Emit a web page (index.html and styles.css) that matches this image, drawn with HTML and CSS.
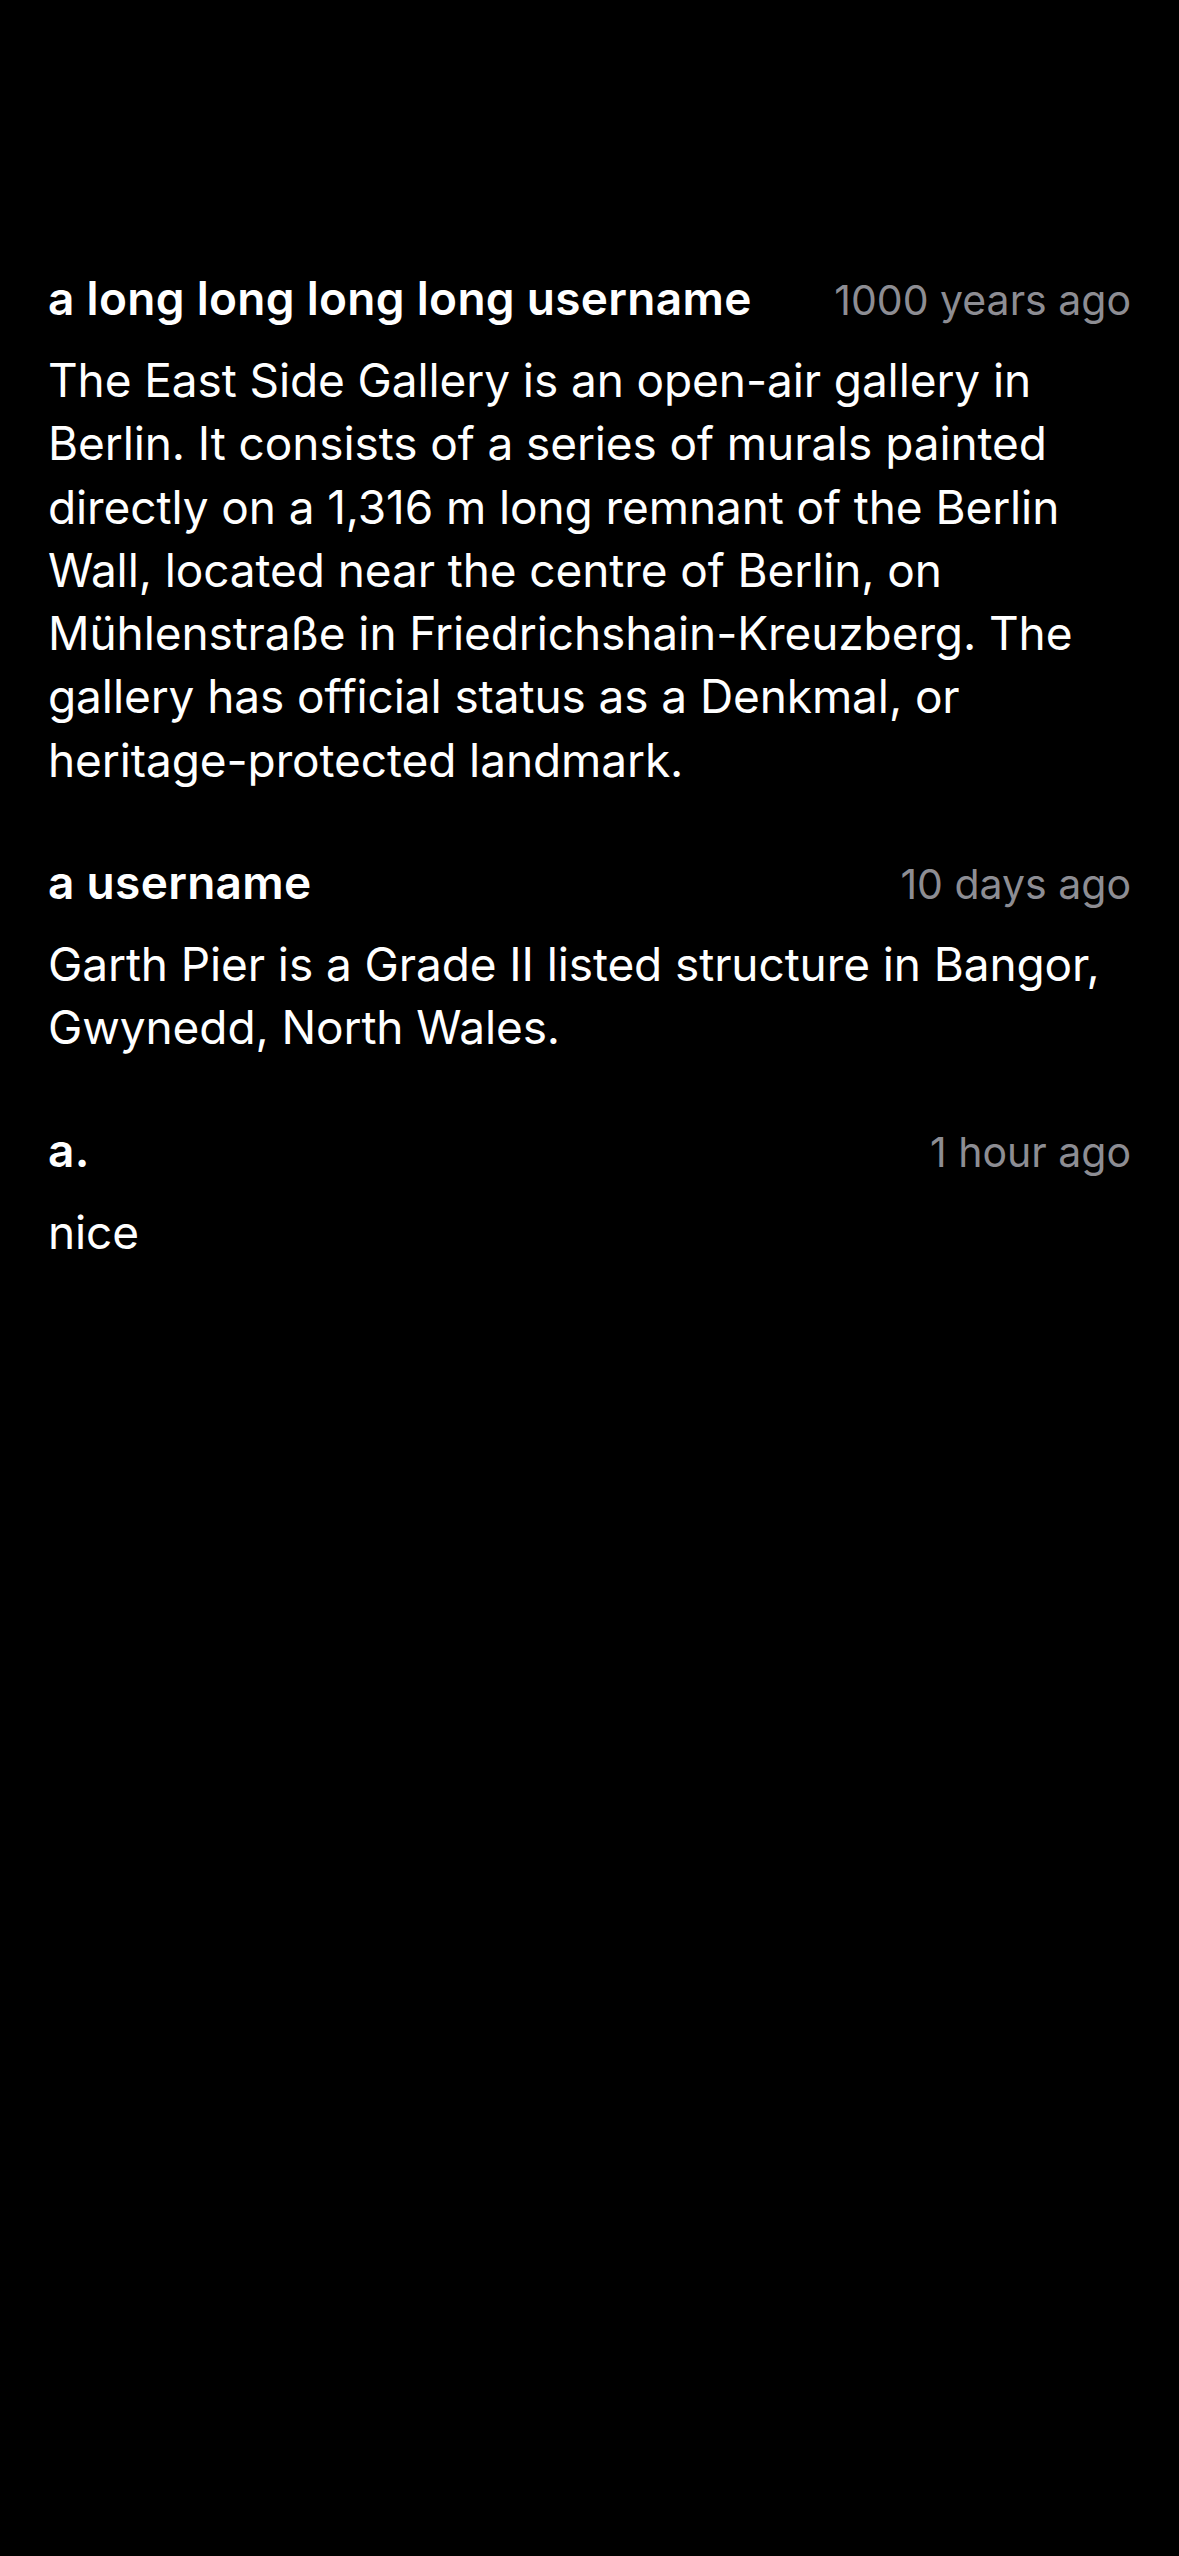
FILE: index.html
```html
<!DOCTYPE html>
<html lang="en">
<head>
<meta charset="utf-8">
<title>Comments</title>
<link rel="stylesheet" href="styles.css">
</head>
<body>
<main class="comments">
  <article class="comment">
    <header class="comment-head">
      <span class="author">a long long long long username</span>
      <span class="time">1000 years ago</span>
    </header>
    <p class="text">The East Side Gallery is an open-air gallery in Berlin. It consists of a series of murals painted directly on a 1,316 m long remnant of the Berlin Wall, located near the centre of Berlin, on Mühlenstraße in Friedrichshain-Kreuzberg. The gallery has official status as a Denkmal, or heritage-protected landmark.</p>
  </article>
  <article class="comment">
    <header class="comment-head">
      <span class="author">a username</span>
      <span class="time">10 days ago</span>
    </header>
    <p class="text">Garth Pier is a Grade II listed structure in Bangor, Gwynedd, North Wales.</p>
  </article>
  <article class="comment">
    <header class="comment-head">
      <span class="author">a.</span>
      <span class="time">1 hour ago</span>
    </header>
    <p class="text">nice</p>
  </article>
</main>
</body>
</html>
```

FILE: styles.css
```css
html, body {
  margin: 0;
  padding: 0;
  background: #000;
}

body {
  width: 1179px;
  min-height: 2556px;
  font-family: Inter, "Noto Sans", sans-serif;
  color: #fff;
}

.comments {
  display: flex;
  flex-direction: column;
  gap: 62px;
  padding: 270px 48px 0 48px;
}

.comment {
  display: flex;
  flex-direction: column;
  gap: 23px;
}

.comment-head {
  display: flex;
  justify-content: space-between;
  align-items: baseline;
  gap: 40px;
  height: 56px;
  line-height: 56px;
}

.author {
  font-size: 46px;
  font-weight: 600;
  letter-spacing: 0.3px;
}

.time {
  font-size: 41px;
  color: #8d8d93;
  letter-spacing: 0;
}

.text {
  margin: 0;
  font-size: 46px;
  line-height: 63.3px;
  letter-spacing: -0.1px;
}
```
